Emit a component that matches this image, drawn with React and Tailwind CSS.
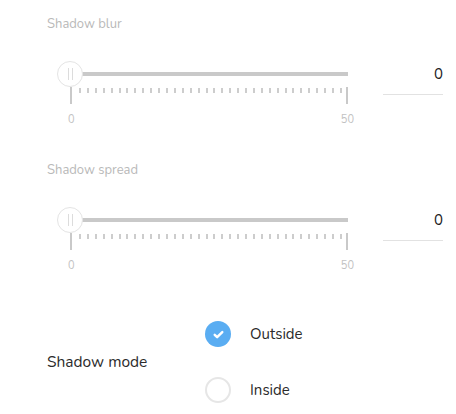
import React from "react";

const FONT = { fontFamily: '"Nunito", Lato, "Open Sans", sans-serif' };

function Slider() {
  return (
    <div className="relative ml-[23px] w-[278px]">
      <div className="h-[4px] w-full bg-[#c9c9c9]" />
      <span className="absolute -left-[13px] -top-[11px] flex h-[26px] w-[26px] items-center justify-center gap-[3px] rounded-full border border-[#e4e4e4] bg-white">
        <span className="h-[12px] w-px bg-[#dcdcdc]" />
        <span className="h-[12px] w-px bg-[#dcdcdc]" />
      </span>

      <div className="relative mt-[11px] h-[17px]">
        <span className="absolute left-0 top-0 h-full w-[2px] bg-[#c9c9c9]" />
        <span className="absolute right-0 top-0 h-full w-[2px] bg-[#c9c9c9]" />
        <div className="absolute left-[9px] top-[1px] flex w-[263px] justify-between">
          {Array.from({ length: 34 }).map((_, i) => (
            <span key={i} className="h-[5px] w-[2px] bg-[#cdcdcd]" />
          ))}
        </div>
      </div>

      <div className="-ml-[2px] mt-[9px] flex w-[286px] justify-between text-[11px] leading-[14px] text-[#c2c2c2]">
        <span>0</span>
        <span>50</span>
      </div>
    </div>
  );
}

function SliderField({ label, value }) {
  return (
    <div>
      <p className="h-[18px] text-[13px] leading-[18px] text-[#b9b9b9]">{label}</p>
      <div className="mt-[39px] flex items-start">
        <Slider />
        <div className="-mt-[17px] ml-[35px] flex h-[40px] w-[60px] items-center justify-end border-b border-[#e2e2e2] text-[15px] text-[#222]">
          {value}
        </div>
      </div>
    </div>
  );
}

function Option({ label, checked }) {
  return (
    <div className="flex items-center">
      {checked ? (
        <span className="flex h-[26px] w-[26px] items-center justify-center rounded-full bg-[#5aadf2]">
          <svg width="13" height="13" viewBox="0 0 24 24" fill="none" stroke="white" strokeWidth="4.5" strokeLinecap="round" strokeLinejoin="round">
            <path d="M5 12.5l4.5 4.5L19 7.5" />
          </svg>
        </span>
      ) : (
        <span className="h-[26px] w-[26px] rounded-full border-2 border-[#e6e6e6] bg-white" />
      )}
      <span className="ml-[19px] text-[15px] text-[#2b2b2b]">{label}</span>
    </div>
  );
}

export default function App() {
  return (
    <div className="h-[414px] w-[456px] overflow-hidden bg-white pl-[47px] pt-[15px]" style={FONT}>
      <SliderField label="Shadow blur" value="0" />
      <div className="mt-[34px]">
        <SliderField label="Shadow spread" value="0" />
      </div>

      <div className="mt-[48px] flex items-center">
        <span className="w-[158px] text-[15.5px] text-[#2b2b2b]">Shadow mode</span>
        <div className="flex flex-col gap-[30px]">
          <Option label="Outside" checked />
          <Option label="Inside" />
        </div>
      </div>
    </div>
  );
}
